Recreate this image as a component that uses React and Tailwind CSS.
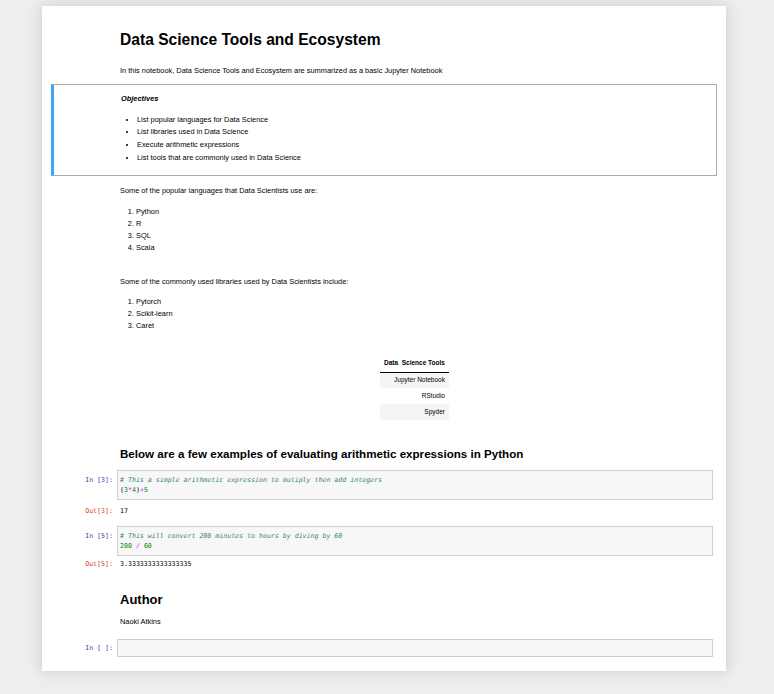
import React from 'react';

const sans = { fontFamily: '"Liberation Sans", Arial, sans-serif' };
const mono = { fontFamily: '"DejaVu Sans Mono", "Liberation Mono", monospace' };

const Prompt = ({ kind, n }) => (
    <div
        className={`w-[62px] shrink-0 pr-[4px] text-right text-[6.6px] leading-[10px] ${kind === 'In' ? 'pt-[5px] text-[#303f9f]' : 'text-[#d84315]'}`}
        style={mono}
    >
        {kind === 'In' ? <>In&nbsp;[{n}]:</> : <>Out[{n}]:</>}
    </div>
);

const CodeCell = ({ n, children }) => (
    <div className="mx-[9px] flex px-[4px]">
        <Prompt kind="In" n={n} />
        <div
            className="flex-1 border border-[#cfcfcf] bg-[#f7f7f7] px-[2px] py-[4px] text-[6.6px] leading-[10px]"
            style={mono}
        >
            {children}
        </div>
    </div>
);

const OutCell = ({ n, value }) => (
    <div className="mx-[9px] flex px-[4px]">
        <Prompt kind="Out" n={n} />
        <div className="flex-1 px-[3px] text-[6.6px] leading-[10px] text-black" style={mono}>
            {value}
        </div>
    </div>
);

const Markdown = ({ className = '', children }) => (
    <div className={`mx-[9px] flex px-[4px] ${className}`}>
        <div className="w-[62px] shrink-0" />
        <div className="flex-1 px-[3px] text-black" style={sans}>
            {children}
        </div>
    </div>
);

const tools = ['Jupyter Notebook', 'RStudio', 'Spyder'];

const App = () => {
    return (
        <div className="min-h-[694px] bg-[#eeeeee] pt-[6px]">
            <div className="ml-[42px] h-[665px] w-[684px] bg-white pt-[24px] shadow-[0_0_12px_1px_rgba(87,87,87,0.2)]">
                {/* title + intro */}
                <Markdown>
                    <h1 className="text-[15.6px] font-bold leading-[20px]">Data Science Tools and Ecosystem</h1>
                    <p className="mt-[16px] text-[7.4px] leading-[10px]">
                        In this notebook, Data Science Tools and Ecosystem are summarized as a basic Jupyter Notebook
                    </p>
                </Markdown>

                {/* selected cell */}
                <div className="mx-[9px] mt-[8px] flex h-[92px] border border-l-[3px] border-[#ababab] border-l-[#42a5f5] pl-[2px] pr-[4px]">
                    <div className="w-[62px] shrink-0" />
                    <div className="flex-1 px-[3px] pt-[9px] text-black" style={sans}>
                        <p className="text-[7.4px] font-bold italic leading-[10px]">Objectives</p>
                        <ul className="mt-[9.67px] list-disc pl-[16px] text-[7.4px] leading-[12.67px]">
                            <li>List popular languages for Data Science</li>
                            <li>List libraries used in Data Science</li>
                            <li>Execute arithmetic expressions</li>
                            <li>List tools that are commonly used in Data Science</li>
                        </ul>
                    </div>
                </div>

                {/* languages / libraries */}
                <Markdown className="mt-[10px]">
                    <p className="text-[7.4px] leading-[10px]">Some of the popular languages that Data Scientists use are:</p>
                    <ol className="mt-[10px] list-decimal pl-[16px] text-[7.4px] leading-[12px]">
                        <li>Python</li>
                        <li>R</li>
                        <li>SQL</li>
                        <li>Scala</li>
                    </ol>
                    <p className="mt-[23px] text-[7.4px] leading-[10px]">
                        Some of the commonly used libraries used by Data Scientists include:
                    </p>
                    <ol className="mt-[9px] list-decimal pl-[16px] text-[7.4px] leading-[12px]">
                        <li>Pytorch</li>
                        <li>Scikit-learn</li>
                        <li>Caret</li>
                    </ol>

                    {/* tools table */}
                    <div className="mt-[22px] flex justify-center pr-[1px]">
                        <table className="border-collapse text-[6.5px] text-black">
                            <thead>
                                <tr className="border-b border-black">
                                    <th className="h-[18px] px-[4px] text-right font-bold">Data&nbsp; Science Tools</th>
                                </tr>
                            </thead>
                            <tbody>
                                {tools.map((t, i) => (
                                    <tr key={t} className={i % 2 === 0 ? 'bg-[#f5f5f5]' : ''}>
                                        <td className="h-[16px] px-[4px] text-right">{t}</td>
                                    </tr>
                                ))}
                            </tbody>
                        </table>
                    </div>

                    <h2 className="mt-[26px] text-[11.6px] font-bold leading-[16px]">
                        Below are a few examples of evaluating arithmetic expressions in Python
                    </h2>
                </Markdown>

                {/* code cells */}
                <div className="mt-[8px]">
                    <CodeCell n="3">
                        <div className="italic text-[#408080]"># This a simple arithmetic expression to mutiply then add integers</div>
                        <div>
                            (<span className="text-[#008000]">3</span>
                            <span className="text-[#aa22ff]">*</span>
                            <span className="text-[#008000]">4</span>)
                            <span className="text-[#aa22ff]">+</span>
                            <span className="text-[#008000]">5</span>
                        </div>
                    </CodeCell>
                </div>
                <div className="mt-[6px]">
                    <OutCell n="3" value="17" />
                </div>
                <div className="mt-[10px]">
                    <CodeCell n="5">
                        <div className="italic text-[#408080]"># This will convert 200 minutes to hours by diving by 60</div>
                        <div>
                            <span className="text-[#008000]">200</span> <span className="text-[#aa22ff]">/</span>{' '}
                            <span className="text-[#008000]">60</span>
                        </div>
                    </CodeCell>
                </div>
                <div className="mt-[3px]">
                    <OutCell n="5" value="3.3333333333333335" />
                </div>

                {/* author */}
                <Markdown className="mt-[22px]">
                    <h2 className="text-[13px] font-bold leading-[18px]">Author</h2>
                    <p className="mt-[8px] text-[7.4px] leading-[10px]">Naoki Atkins</p>
                </Markdown>

                <div className="mx-[9px] mt-[12px] flex px-[4px]">
                    <div
                        className="w-[62px] shrink-0 pr-[4px] pt-[4px] text-right text-[6.6px] leading-[10px] text-[#303f9f]"
                        style={mono}
                    >
                        In&nbsp;[&nbsp;]:
                    </div>
                    <div className="h-[18px] flex-1 border border-[#cfcfcf] bg-[#f7f7f7]" />
                </div>
            </div>
        </div>
    );
};

export default App;
